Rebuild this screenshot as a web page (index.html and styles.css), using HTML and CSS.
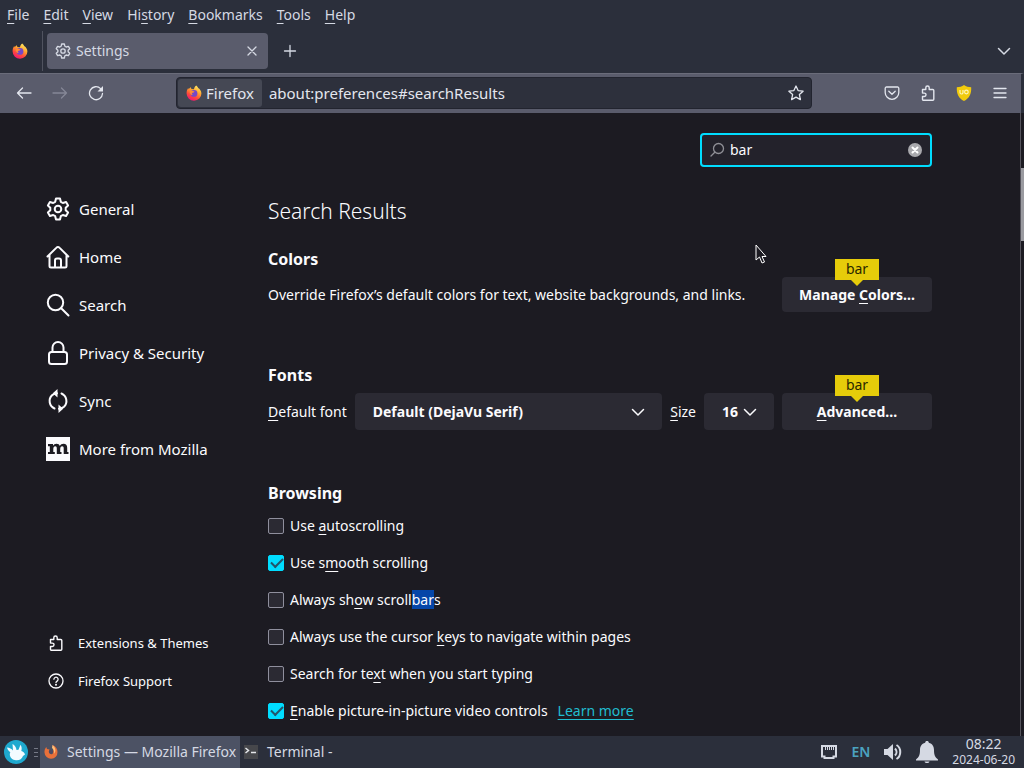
FILE: index.html
```html
<!DOCTYPE html>
<html lang="en">
<head>
  <meta charset="UTF-8" />
  <meta name="viewport" content="width=device-width, initial-scale=1.0"/>
  <title>Settings</title>
  <link rel="stylesheet" href="styles.css">
</head>
<body>
  <svg class="sprite" aria-hidden="true">
    <defs>
      <linearGradient id="flame" x1="0.8" y1="0" x2="0.3" y2="1">
        <stop offset="0" stop-color="#fff36b"/>
        <stop offset="0.4" stop-color="#ffa52f"/>
        <stop offset="0.7" stop-color="#ff4a3a"/>
        <stop offset="1" stop-color="#f0127a"/>
      </linearGradient>
      <symbol id="firefox" viewBox="0 0 16 16">
        <path fill="url(#flame)" d="M10.2 0.4c1 .8 1.700 1.700 2 2.700 2 1.400 3.200 3.200 3.200 5.300a7.400 7.200 0 0 1-14.800.2C.5 6.300 1.100 4.500 2.200 2.900l.5 1.300c.7-1 1.300-1.600 2.200-2l.5 1.900 2.600.2c.1-1.700.9-2.900 2.200-3.900z"/>
        <circle cx="8" cy="8.400" r="3.400" fill="#7548c8"/>
        <path fill="#ff8b35" d="M3.700 6.200c1.600-.8 3-.6 4.800.2-.4.900-1.200 1.200-2.200 1.300-.8.600-.4 1.700.6 2-1.500.7-3-.1-3.200-3.500z"/>
      </symbol>
      <symbol id="firefox-small" viewBox="0 0 16 16">
        <path fill="#e8703a" d="M9.500 1c3.500 1.500 5 4 5 7a6.500 6.500 0 0 1-13 .5C1.300 6.500 2 4.500 3.300 3l.7 2 2.500.5C6 7 6 8.500 7 9.800c1 .9 2.600.4 3-.8.7-2 .2-5-.5-8z"/>
        <path fill="#ffc07a" d="M9.500 1c3.200 2.500 3.800 6 1.800 8.800C11.300 7 10.500 5 9 4z"/>
        <circle cx="7.800" cy="7.800" r="2" fill="#4c4a64"/>
      </symbol>
      <symbol id="gear" viewBox="0 0 24 24">
        <path fill="none" stroke="currentColor" stroke-width="2" stroke-linejoin="round" d="M10 1.500h4l.8 3.300 2 1.200 3.300-1 2 3.500-2.400 2.300v2.400l2.400 2.300-2 3.500-3.300-1-2 1.200-.8 3.300h-4l-.8-3.300-2-1.200-3.300 1-2-3.500 2.400-2.300v-2.400L1.900 8.500l2-3.500 3.300 1 2-1.200z"/>
        <circle cx="12" cy="12" r="3.300" fill="none" stroke="currentColor" stroke-width="2"/>
      </symbol>
      <symbol id="puzzle" viewBox="0 0 16 16">
        <path fill="none" stroke="currentColor" stroke-width="1.400" stroke-linejoin="round" d="M2.500 4.500h3.300V2.700a1.700 1.700 0 0 1 3.400 0v1.800h3.600a1 1 0 0 1 1 1v8.800a1 1 0 0 1-1 1H3.500a1 1 0 0 1-1-1v-2.800h1.800a1.700 1.700 0 0 0 0-3.400H2.500z"/>
      </symbol>
      <symbol id="chevron" viewBox="0 0 14 14">
        <path fill="none" stroke="currentColor" stroke-width="1.500" stroke-linecap="round" stroke-linejoin="round" d="M1.500 4.500 7 10l5.500-5.500"/>
      </symbol>
    </defs>
  </svg>

  <nav class="menubar">
    <a href="#"><u>F</u>ile</a>
    <a href="#"><u>E</u>dit</a>
    <a href="#"><u>V</u>iew</a>
    <a href="#">Hi<u>s</u>tory</a>
    <a href="#"><u>B</u>ookmarks</a>
    <a href="#"><u>T</u>ools</a>
    <a href="#"><u>H</u>elp</a>
  </nav>

  <div class="tabbar">
    <button class="view-button" aria-label="Firefox View"><svg class="icon"><use href="#firefox"/></svg></button>
    <div class="tab">
      <svg class="icon"><use href="#gear"/></svg>
      <span class="tab-title">Settings</span>
      <button aria-label="Close tab"><svg class="icon-small" viewBox="0 0 12 12"><path class="line" d="M2 2l8 8M10 2l-8 8"/></svg></button>
    </div>
    <button class="new-tab" aria-label="New tab"><svg class="icon" viewBox="0 0 16 16"><path class="line" d="M8 2.500v11M2.500 8h11"/></svg></button>
    <button class="all-tabs" aria-label="List all tabs"><svg class="icon-mid"><use href="#chevron"/></svg></button>
  </div>

  <div class="toolbar">
    <div class="nav-buttons">
      <button aria-label="Back"><svg class="icon" viewBox="0 0 16 16"><path class="line" d="M15 8H1.500M6.500 3l-5 5 5 5"/></svg></button>
      <button class="dim" aria-label="Forward"><svg class="icon" viewBox="0 0 16 16"><path class="line" d="M1 8h13.500M9.500 3l5 5-5 5"/></svg></button>
      <button aria-label="Reload"><svg class="icon" viewBox="0 0 16 16"><path class="line" d="M14.500 8.500A6.500 6.500 0 1 1 12.600 3.600"/><path fill="currentColor" d="M15 1v5.500H9.500z"/></svg></button>
    </div>
    <div class="urlbar">
      <span class="identity"><svg class="icon"><use href="#firefox"/></svg>Firefox</span>
      <input type="text" value="about:preferences#searchResults" aria-label="Address">
      <button aria-label="Bookmark this page"><svg class="icon" viewBox="0 0 16 16"><path class="line" d="M8 1l2.100 4.600 5 .6-3.700 3.400 1 5L8 12.100l-4.400 2.500 1-5L.9 6.200l5-.6z"/></svg></button>
    </div>
    <div class="tool-buttons">
      <button aria-label="Save to Pocket"><svg class="icon" viewBox="0 0 16 16"><path class="line" d="M2.500 2h11a1.300 1.300 0 0 1 1.300 1.300V7.500a6.800 6.800 0 0 1-13.600 0V3.300A1.300 1.300 0 0 1 2.500 2zM4.800 6.200 8 9.300l3.200-3.100"/></svg></button>
      <button aria-label="Extensions"><svg class="icon"><use href="#puzzle"/></svg></button>
      <button aria-label="uBlock Origin"><svg class="icon" viewBox="0 0 16 16"><path fill="#f2cb0c" d="M8 0c2 1.500 4.500 2.200 7.200 2.200C15.500 9 13.500 13 8 16 2.500 13 .5 9 .8 2.200 3.500 2.200 6 1.500 8 0z"/><path fill="none" stroke="#fff6b8" stroke-width="1.200" d="M4 5v2.500a1.500 1.500 0 0 0 3 0V5"/><circle cx="10.400" cy="7" r="1.800" fill="none" stroke="#fff6b8" stroke-width="1.200"/></svg></button>
      <button aria-label="Open menu"><svg class="icon" viewBox="0 0 16 16"><path class="line" d="M2 3.500h12M2 8h12M2 12.500h12"/></svg></button>
    </div>
  </div>

  <div class="page">
    <aside class="sidebar">
      <nav class="categories">
        <a href="#"><svg class="icon-large"><use href="#gear"/></svg>General</a>
        <a href="#"><svg class="icon-large" viewBox="0 0 24 24"><path class="bold-line" d="M1.500 11.500 10.500 2.600a2 2 0 0 1 2.900 0l8.900 8.900M3.500 10v11a1.500 1.500 0 0 0 1.500 1.500h14a1.500 1.500 0 0 0 1.500-1.500V10M9 22v-6.500a2 2 0 0 1 2-2h2a2 2 0 0 1 2 2V22"/></svg>Home</a>
        <a href="#"><svg class="icon-large" viewBox="0 0 24 24"><circle class="bold-line" cx="9.500" cy="9.500" r="7.700"/><path class="bold-line" d="M15.200 15.200l7.300 7.300"/></svg>Search</a>
        <a href="#"><svg class="icon-large" viewBox="0 0 24 24"><rect class="bold-line" x="3" y="11" width="18" height="12" rx="2.500"/><path class="bold-line" d="M6.500 11V6.500a5.500 5.500 0 0 1 11 0V11"/></svg>Privacy &amp; Security</a>
        <a href="#"><svg class="icon-large" viewBox="0 0 24 24"><path class="bold-line" d="M8.500 19.500A8.200 8.200 0 0 1 6 6.200a8 8 0 0 1 5-2M15.500 4.500A8.200 8.200 0 0 1 18 17.800a8 8 0 0 1-5 2"/><path fill="currentColor" d="M11.500 0v8.500L6.800 4.200zM12.500 24v-8.500l4.700 4.300z"/></svg>Sync</a>
        <a href="#"><svg class="icon-large" viewBox="0 0 24 24"><path fill="#fbfbfe" d="M0 0h24v24H0z"/><path fill="#1c1b22" d="M2 7h5v1.800C7.800 7.500 9 6.700 10.500 6.700c1.700 0 2.900.8 3.300 2.200.8-1.400 2.100-2.200 3.700-2.200 2.400 0 3.700 1.500 3.700 4V15h1.300v2h-4.800v-5.500c0-1.500-.5-2.200-1.500-2.200-1.400 0-2 1.200-2 2.700v3h1.300v2H10.800v-5.500c0-1.500-.5-2.200-1.500-2.200-1.300 0-2 1.200-2 2.700v3h1.500v2H2v-2h1.800V9.200H2z"/></svg>More from Mozilla</a>
      </nav>
      <nav class="side-links">
        <a href="#"><svg class="icon"><use href="#puzzle"/></svg>Extensions &amp; Themes</a>
        <a href="#"><svg class="icon" viewBox="0 0 16 16"><circle class="line" cx="8" cy="8" r="7"/><path class="line" d="M5.900 6.200a2.100 2.100 0 1 1 3.200 1.900C8.300 8.600 8 8.900 8 9.600"/><circle cx="8" cy="11.700" r="1" fill="currentColor"/></svg>Firefox Support</a>
      </nav>
    </aside>

    <main class="main">
      <div class="search-box">
        <svg class="icon" viewBox="0 0 16 16"><circle class="line" cx="9.500" cy="6.500" r="5"/><path class="line" d="M5.800 10.200 2 14"/></svg>
        <input type="text" value="bar" aria-label="Find in Settings">
        <button aria-label="Clear"><svg class="icon" viewBox="0 0 16 16"><circle cx="8" cy="8" r="7" fill="#a9a9ad"/><path stroke="#fff" stroke-width="2" stroke-linecap="round" d="M5.500 5.500l5 5M10.500 5.500l-5 5"/></svg></button>
      </div>

      <h1>Search Results</h1>

      <section>
        <h2>Colors</h2>
        <div class="row">
          <p>Override Firefox’s default colors for text, website backgrounds, and links.</p>
          <div class="hit">
            <button class="action">Manage <u>C</u>olors…</button>
            <span class="bubble">bar</span>
          </div>
        </div>
      </section>

      <section>
        <h2>Fonts</h2>
        <div class="row font-row">
          <label for="font"><u>D</u>efault font</label>
          <div class="picker picker-font">
            <select id="font"><option>Default (DejaVu Serif)</option></select>
            <svg class="icon-mid"><use href="#chevron"/></svg>
          </div>
          <label for="size"><u>S</u>ize</label>
          <div class="picker picker-size">
            <select id="size"><option>16</option></select>
            <svg class="icon-mid"><use href="#chevron"/></svg>
          </div>
          <div class="hit">
            <button class="action"><u>A</u>dvanced…</button>
            <span class="bubble">bar</span>
          </div>
        </div>
      </section>

      <section>
        <h2>Browsing</h2>
        <div class="checks">
          <div class="check"><input type="checkbox" id="auto"><label for="auto">Use <u>a</u>utoscrolling</label></div>
          <div class="check"><input type="checkbox" id="smooth" checked><label for="smooth">Use s<u>m</u>ooth scrolling</label></div>
          <div class="check"><input type="checkbox" id="bars"><label for="bars">Always sh<u>o</u>w scroll<mark>bar</mark>s</label></div>
          <div class="check"><input type="checkbox" id="keys"><label for="keys">Always use the cursor <u>k</u>eys to navigate within pages</label></div>
          <div class="check"><input type="checkbox" id="typing"><label for="typing">Search for te<u>x</u>t when you start typing</label></div>
          <div class="check"><input type="checkbox" id="pip" checked><label for="pip"><u>E</u>nable picture-in-picture video controls</label><a href="#">Learn more</a></div>
        </div>
      </section>
    </main>
    <div class="scrollbar"><div class="thumb"></div></div>
    <svg class="cursor" viewBox="0 0 12 20"><path fill="#1c1b22" stroke="#fff" stroke-linejoin="round" d="M1 1v15l3.500-3 2.500 6 2.500-1-2.500-5.500H11z"/></svg>
  </div>

  <footer class="taskbar">
    <button class="start" aria-label="Applications"><svg viewBox="0 0 24 24"><circle cx="12" cy="12" r="12" fill="#1fa9cf"/><path fill="#f4fbff" d="M3 7.500c2.500.2 4.500 1.200 6 3L8.500 4c2.300 1.200 3.700 3.200 4 6l2-.2 2-5c1.300 1.800 1.500 4 .8 6.200 1.800.5 3.200 1.700 3.700 3.500l-2 1.500c-1 3-3.700 4.500-7 4.200-3.500-.3-6-2.500-6.200-5.500-.1-1 .1-1.800.5-2.500C4.800 11 3.500 9.500 3 7.500z"/></svg></button>
    <span class="grip"></span>
    <button class="task active"><svg class="icon"><use href="#firefox-small"/></svg>Settings — Mozilla Firefox</button>
    <button class="task"><svg class="icon" viewBox="0 0 16 16"><path fill="#46474b" d="M1 1h14v14H1z"/><path fill="none" stroke="#e4e6ea" stroke-width="1.500" d="M2.500 4l3 2.500-3 2.500M8 8.500h5"/></svg>Terminal -</button>
    <div class="tray">
      <svg class="icon" viewBox="0 0 16 16"><path fill="none" stroke="currentColor" stroke-width="2" d="M1 2h14v10.500h-2.500V14h-9v-1.500H1z"/><path stroke="currentColor" d="M4.500 3v3M6.500 3v3M8.500 3v3M10.500 3v3M12.500 3v3"/></svg>
      <span class="lang">EN</span>
      <svg class="icon-sound" viewBox="0 0 18 18"><path fill="currentColor" d="M0 6h3.500L9 1v16l-5.500-5H0z"/><path fill="none" stroke="currentColor" stroke-width="2" d="M11 5.500c2 2 2 5 0 7M12.500 2c5 3 5 11 0 14"/></svg>
      <svg class="icon-bell" viewBox="0 0 22 22"><path fill="currentColor" d="M11 0c1.200 0 1.800.7 1.800 1.700C16.500 2.700 18 5.500 18 9c0 5 1 7 4 9.500v1H0v-1C3 16 4 14 4 9c0-3.500 1.500-6.300 5.200-7.300C9.200.7 9.800 0 11 0zM8.500 20.500h5c-.5 2-4.500 2-5 0z"/></svg>
      <div class="clock"><span class="time">08:22</span><span class="date">2024-06-20</span></div>
    </div>
  </footer>
</body>
</html>
```

FILE: styles.css
```css
* {
  box-sizing: border-box;
}
body {
  margin: 0;
  height: 100vh;
  display: flex;
  flex-direction: column;
  overflow: hidden;
  font-family: "Noto Sans", sans-serif;
  font-size: 14px;
  line-height: 20px;
  color: #fbfbfe;
  background: #1c1b22;
}
button, input, select {
  font: inherit;
  color: inherit;
  background: none;
  border: none;
  padding: 0;
  margin: 0;
  outline: none;
}
button {
  display: flex;
  align-items: center;
  justify-content: center;
}
a {
  color: inherit;
  text-decoration: none;
}
u {
  text-underline-offset: 3px;
  text-decoration-thickness: 1px;
}
svg {
  flex: none;
}
.sprite {
  position: absolute;
  width: 0;
  height: 0;
}
.icon {
  width: 16px;
  height: 16px;
}
.icon-small {
  width: 12px;
  height: 12px;
}
.icon-mid {
  width: 14px;
  height: 14px;
}
.icon-large {
  width: 24px;
  height: 24px;
}
.line, .bold-line {
  fill: none;
  stroke: currentColor;
  stroke-width: 1.3;
  stroke-linecap: round;
  stroke-linejoin: round;
}
.bold-line {
  stroke-width: 2;
}

/* browser chrome */
.menubar {
  display: flex;
  gap: 14px;
  height: 30px;
  padding: 5px 7px;
  background: #2b2f3b;
  color: #d5d9e3;
}
.tabbar {
  display: flex;
  align-items: center;
  height: 43px;
  padding: 0 13px 2px 0;
  background: #2b2f3b;
  color: #d5d9e3;
}
.view-button {
  width: 43px;
  height: 40px;
  padding-right: 3px;
  border-right: 1px solid #50535f;
}
.tab {
  display: flex;
  align-items: center;
  gap: 5px;
  width: 221px;
  height: 36px;
  margin-left: 4px;
  padding: 0 10px 0 8px;
  border-radius: 4px;
  background: #5a5c6c;
}
.tab-title {
  flex: 1;
}
.new-tab {
  margin-left: 14px;
}
.all-tabs {
  margin-left: auto;
}
.toolbar {
  display: flex;
  align-items: center;
  height: 40px;
  padding-bottom: 1px;
  border-top: 1px solid #6a6c7a;
  border-right: 3px solid #2b2f3b;
  background: #5a5c6c;
  color: #e3e6ee;
}
.nav-buttons {
  display: flex;
  gap: 20px;
  width: 176px;
  padding-left: 16px;
}
.dim {
  color: #858796;
}
.urlbar {
  display: flex;
  align-items: center;
  flex: 1;
  height: 32px;
  margin-right: 72px;
  padding-right: 7px;
  border: 1px solid #22242f;
  border-radius: 4px;
  background: #2d303c;
  font-size: 15px;
}
.urlbar input {
  flex: 1;
  min-width: 0;
}
.identity {
  display: flex;
  align-items: center;
  gap: 4px;
  height: 28px;
  margin: 0 7px 0 1px;
  padding: 0 8px;
  border-radius: 3px;
  background: #454854;
}
.tool-buttons {
  display: flex;
  gap: 20px;
  padding-right: 13px;
}

/* settings page */
.page {
  position: relative;
  display: flex;
  flex: 1;
  min-height: 0;
  overflow: hidden;
}
.sidebar {
  display: flex;
  flex-direction: column;
  justify-content: space-between;
  flex: 0 0 268px;
  padding: 72px 0 36px 46px;
}
.categories a, .side-links a {
  display: flex;
  align-items: center;
}
.categories a {
  gap: 9px;
  height: 48px;
  font-size: 15px;
}
.side-links a {
  gap: 14px;
  height: 38px;
  padding-left: 2px;
  font-size: 13px;
}
.main {
  flex: 1;
  max-width: 664px;
  padding-top: 20px;
}
.search-box {
  display: flex;
  align-items: center;
  gap: 5px;
  width: 232px;
  height: 34px;
  margin-left: auto;
  padding: 0 7px;
  border: 2px solid #00ddff;
  border-radius: 4px;
  background: #23222b;
}
.search-box .line {
  stroke: #8f8f96;
}
.search-box input {
  flex: 1;
  min-width: 0;
}
h1 {
  margin: 28px 0 20px;
  font-size: 21px;
  font-weight: 300;
  line-height: 32px;
}
h2 {
  margin: 0 0 6px;
  font-size: 16px;
  font-weight: 700;
  line-height: 24px;
}
section {
  margin-bottom: 51px;
}
.row {
  display: flex;
  align-items: center;
  gap: 8px;
}
.row p {
  flex: 1;
  margin: 0;
}
.hit {
  position: relative;
}
.action {
  width: 150px;
  height: 35px;
  border-radius: 4px;
  background: #2b2a33;
  font-weight: 700;
  white-space: pre;
}
.bubble {
  position: absolute;
  left: 53px;
  bottom: 100%;
  width: 44px;
  height: 21px;
  margin-bottom: -3px;
  background: #e6cc0a;
  color: #2a2700;
  text-align: center;
}
.bubble::after {
  content: "";
  position: absolute;
  top: 100%;
  left: 16px;
  border: 6px solid transparent;
  border-top-color: #e6cc0a;
  border-bottom: none;
}
.font-row .action, .picker {
  height: 37px;
}
.picker {
  display: grid;
  align-items: center;
  border-radius: 4px;
  background: #2b2a33;
  font-weight: 700;
}
.picker select, .picker svg {
  grid-area: 1 / 1;
}
.picker select {
  appearance: none;
  width: 100%;
  height: 100%;
  padding-left: 18px;
}
.picker svg {
  justify-self: end;
  margin-right: 17px;
  pointer-events: none;
}
.picker-font {
  flex: 1;
}
.picker-size {
  width: 70px;
}
.checks {
  display: grid;
  gap: 7px;
}
.check {
  display: flex;
  align-items: center;
  gap: 6px;
  height: 30px;
}
.check input {
  position: relative;
  appearance: none;
  width: 16px;
  height: 16px;
  border: 1px solid #8f8f9d;
  border-radius: 2px;
  background: #2b2a33;
}
.check input:checked {
  border-color: #00ddff;
  background: #00ddff;
}
.check input:checked::after {
  content: "";
  position: absolute;
  left: 2px;
  top: 2px;
  width: 10px;
  height: 5px;
  border: solid #23556a;
  border-width: 0 0 2px 2px;
  transform: rotate(-45deg);
}
.check a {
  margin-left: 4px;
  color: #21bdd0;
  text-decoration: underline;
  text-underline-offset: 3px;
}
mark {
  color: inherit;
  background: #0546a8;
}
.scrollbar {
  width: 4px;
  margin-left: auto;
  padding-top: 55px;
  border-left: 1px solid #55545c;
}
.thumb {
  height: 73px;
  background: #9a9aa0;
}
.cursor {
  position: absolute;
  left: 755px;
  top: 131px;
  width: 12px;
  height: 20px;
}

/* desktop panel */
.taskbar {
  display: flex;
  align-items: center;
  height: 32px;
  background: #2b2f3b;
  color: #d5d9e3;
}
.start {
  padding: 0 6px 0 4px;
}
.start svg {
  width: 24px;
  height: 24px;
}
.grip {
  width: 4px;
  height: 9px;
  margin-right: 2px;
  background: repeating-linear-gradient(#757986 0 1px, transparent 1px 4px);
}
.task {
  gap: 8px;
  height: 32px;
  padding: 0 3px;
  white-space: nowrap;
}
.active {
  justify-content: flex-start;
  width: 200px;
  background: #4c5264;
}
.tray {
  display: flex;
  align-items: center;
  margin-left: auto;
  padding-right: 9px;
  gap: 14px;
}
.lang {
  color: #4ba3c0;
  font-weight: 600;
}
.icon-sound {
  width: 18px;
  height: 18px;
}
.icon-bell {
  width: 22px;
  height: 22px;
}
.clock {
  display: flex;
  flex-direction: column;
  align-items: center;
  line-height: 16px;
}
.time {
  font-size: 14px;
}
.date {
  font-size: 12px;
}
```
